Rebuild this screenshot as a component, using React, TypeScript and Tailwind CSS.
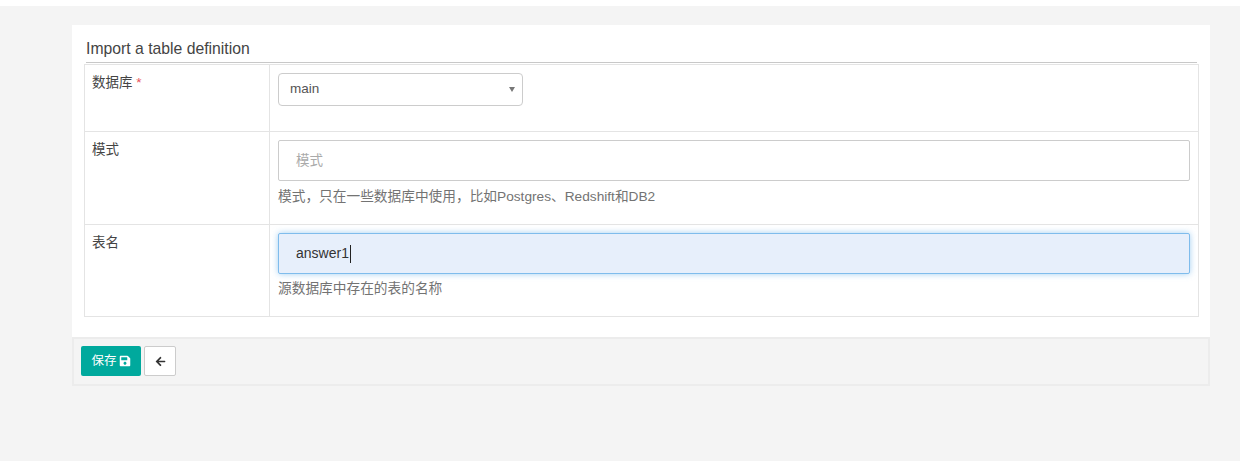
import { FaArrowLeft, FaSave } from "react-icons/fa";

const font = "font-['Liberation_Sans','Noto_Sans_CJK_SC',sans-serif]";

function Row({ label, required, children, last }: { label: string; required?: boolean; children: React.ReactNode; last?: boolean }) {
  return (
    <div className={`flex ${last ? "" : "border-b border-[#e4e4e4]"}`}>
      <div className="w-[185px] shrink-0 border-r border-[#e4e4e4] px-[7px] pt-[9px] text-[13.5px] leading-[18px] text-[#444]">
        {label}
        {required && <span className="text-[#e8505b]"> *</span>}
      </div>
      <div className="flex-1 px-2 pt-2">{children}</div>
    </div>
  );
}

export default function App() {
  return (
    <div className={`h-[461px] overflow-hidden bg-white pt-[6px] ${font}`}>
      <div className="h-full bg-[#f4f4f4] pl-[72px] pr-[30px] pt-[19px]">
        <div className="bg-white pl-3 pr-[11px] pb-5">
          <div className="mx-[2px] border-b border-[#c8c8c8] pt-[15px] pb-[4px] text-[15.75px] leading-[18px] text-[#444]">
            Import a table definition
          </div>
          <div className="mt-[1px] border border-[#e4e4e4]">
            <Row label="数据库" required>
              <div className="h-[58px]">
                <div className="flex h-[33px] w-[245px] items-center justify-between rounded border border-[#ccc] pl-[11px] pr-[7px] text-[13.5px] text-[#555]">
                  <span>main</span>
                  <span className="h-0 w-0 border-x-[3px] border-t-[5px] border-x-transparent border-t-[#777]" />
                </div>
              </div>
            </Row>
            <Row label="模式">
              <div className="h-[84px]">
                <div className="flex h-[41px] items-center rounded-[2px] border border-[#ccc] px-[17px] pt-[2px] text-[13.5px] text-[#aaa]">
                  模式
                </div>
                <p className="mt-[7px] text-[13.7px] leading-[18px] text-[#737373]">
                  模式，只在一些数据库中使用，比如Postgres、Redshift和DB2
                </p>
              </div>
            </Row>
            <Row label="表名" last>
              <div className="h-[83px]">
                <div className="flex h-[41px] items-center rounded-[2px] border border-[#7fbcec] bg-[#e7effb] px-[17px] text-[14px] text-[#333] shadow-[0_0_6px_rgba(102,175,233,0.6)]">
                  answer1
                  <span className="ml-[1px] h-[18px] w-px bg-[#222]" />
                </div>
                <p className="mt-[6px] text-[13.7px] leading-[18px] text-[#737373]">源数据库中存在的表的名称</p>
              </div>
            </Row>
          </div>
        </div>
        <div className="flex h-[49px] items-start gap-[3px] border-2 border-[#ececec] bg-[#f4f4f4] pl-[7px] pt-[7px]">
          <button className="flex h-[30px] w-[60px] items-center justify-center gap-[2px] rounded-[2px] bg-[#00a99d] text-[12.5px] text-white">
            保存
            <FaSave className="h-[12px] w-[12px]" />
          </button>
          <button className="flex h-[30px] w-8 items-center justify-center rounded-[2px] border border-[#ccc] bg-white text-[#333]">
            <FaArrowLeft className="h-[11px] w-[11px]" />
          </button>
        </div>
      </div>
    </div>
  );
}
